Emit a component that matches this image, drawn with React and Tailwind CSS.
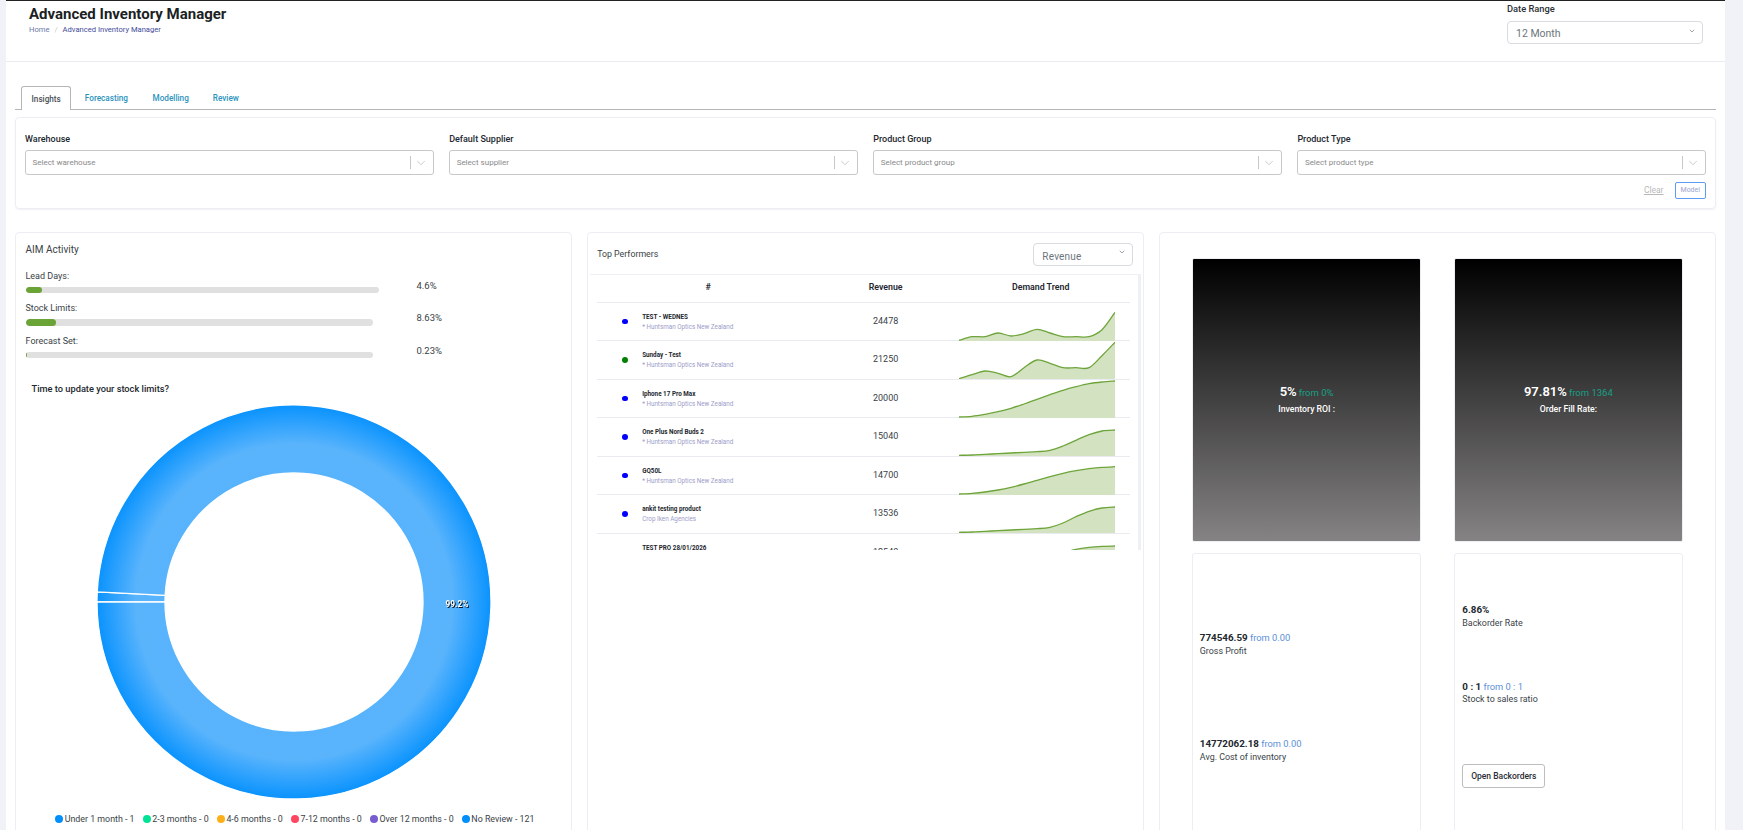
import React from 'react';
import { ChevronDown } from 'lucide-react';

const filters = [
  { label: 'Warehouse', placeholder: 'Select warehouse' },
  { label: 'Default Supplier', placeholder: 'Select supplier' },
  { label: 'Product Group', placeholder: 'Select product group' },
  { label: 'Product Type', placeholder: 'Select product type' },
];

const activity = [
  { label: 'Lead Days:', value: '4.6%', barW: 'w-[353px]', barH: 'h-[6px]', fill: 'w-[16px]', top: 'mb-[8.7px]' },
  { label: 'Stock Limits:', value: '8.63%', barW: 'w-[347px]', barH: 'h-[7px]', fill: 'w-[30px]', top: 'mb-[8.7px]' },
  { label: 'Forecast Set:', value: '0.23%', barW: 'w-[347px]', barH: 'h-[6px]', fill: 'w-[1px]', top: '' },
];

const legend = [
  { label: 'Under 1 month - 1', dot: 'bg-[#008ffb]' },
  { label: '2-3 months - 0', dot: 'bg-[#00e396]' },
  { label: '4-6 months - 0', dot: 'bg-[#feb019]' },
  { label: '7-12 months - 0', dot: 'bg-[#ff4560]' },
  { label: 'Over 12 months - 0', dot: 'bg-[#775dd0]' },
  { label: 'No Review - 121', dot: 'bg-[#008ffb]' },
];

const performers = [
  {
    name: 'TEST - WEDNES',
    supplier: '* Huntsman Optics New Zealand',
    value: '24478',
    dot: 'bg-[#0000ff]',
    trend: [37.3, 33.7, 33.7, 30, 33, 30.7, 26.3, 30, 33.7, 33.7, 33.7, 26.7, 9.3],
  },
  {
    name: 'Sunday - Test',
    supplier: '* Huntsman Optics New Zealand',
    value: '21250',
    dot: 'bg-[#008000]',
    trend: [37.7, 33.7, 30, 32.3, 35.7, 26.7, 19, 22.3, 26.7, 26.7, 26.7, 14.7, 1.3],
  },
  {
    name: 'Iphone 17 Pro Max',
    supplier: '* Huntsman Optics New Zealand',
    value: '20000',
    dot: 'bg-[#0000ff]',
    trend: [37, 36.3, 34.3, 31.7, 28.3, 24, 19.3, 14.7, 10.3, 6.7, 3.7, 2, 1],
  },
  {
    name: 'One Plus Nord Buds 2',
    supplier: '* Huntsman Optics New Zealand',
    value: '15040',
    dot: 'bg-[#0000ff]',
    trend: [37.3, 37, 36.3, 35.7, 35, 34.3, 33.7, 32.3, 28, 22.3, 16.7, 13, 12],
  },
  {
    name: 'GQ50L',
    supplier: '* Huntsman Optics New Zealand',
    value: '14700',
    dot: 'bg-[#0000ff]',
    trend: [37, 36.3, 35, 33, 30.3, 27, 23.3, 19.7, 16.3, 13.7, 11.7, 10.3, 9.7],
  },
  {
    name: 'ankit testing product',
    supplier: 'Crop Iken Agencies',
    value: '13536',
    dot: 'bg-[#0000ff]',
    trend: [37.3, 37, 36.3, 35.7, 35, 34.3, 33.7, 32.3, 28, 21.7, 16.3, 13, 12],
  },
  {
    name: 'TEST PRO 28/01/2026',
    supplier: '* Huntsman Optics New Zealand',
    value: '12540',
    dot: 'bg-[#0000ff]',
    trend: [37, 36.5, 35.5, 34, 32, 30, 27, 24, 19, 15.3, 13.3, 12.3, 12],
  },
];

// catmull-rom through the monthly points, same feel as the apex smooth curve
const trendPath = values => {
  const step = 156 / (values.length - 1);
  const pt = i => {
    const idx = Math.max(0, Math.min(values.length - 1, i));
    return [idx * step, values[idx]];
  };
  let line = `M0 ${values[0]}`;
  for (let i = 0; i < values.length - 1; i += 1) {
    const [x0, y0] = pt(i - 1);
    const [x1, y1] = pt(i);
    const [x2, y2] = pt(i + 1);
    const [x3, y3] = pt(i + 2);
    const c1x = x1 + (x2 - x0) / 6;
    const c1y = y1 + (y2 - y0) / 6;
    const c2x = x2 - (x3 - x1) / 6;
    const c2y = y2 - (y3 - y1) / 6;
    line += ` C${c1x} ${c1y} ${c2x} ${c2y} ${x2} ${y2}`;
  }
  return line;
};

const Sparkline = ({ values }) => {
  const line = trendPath(values);
  return (
    <svg width="156" height="38" viewBox="0 0 156 38" className="block ml-[7px]">
      <path d={`${line} L156 38 L0 38 Z`} fill="#d3e2c0" />
      <path d={line} fill="none" stroke="#6ea53b" strokeWidth="1.3" />
    </svg>
  );
};

const polar = (r, deg) => {
  const a = (deg * Math.PI) / 180;
  return [197 + r * Math.cos(a), 197 + r * Math.sin(a)];
};

const slicePath = (from, to) => {
  const large = to - from > 180 ? 1 : 0;
  const [ax, ay] = polar(197, from);
  const [bx, by] = polar(197, to);
  const [cx, cy] = polar(129, to);
  const [dx, dy] = polar(129, from);
  return `M${ax} ${ay} A197 197 0 ${large} 1 ${bx} ${by} L${cx} ${cy} A129 129 0 ${large} 0 ${dx} ${dy} Z`;
};

const Donut = () => (
  <svg width="394" height="394" viewBox="0 0 394 394" className="block ml-[71px] mt-[10.5px]">
    <defs>
      <radialGradient id="ring" gradientUnits="userSpaceOnUse" cx="197" cy="197" r="197">
        <stop offset="0.65" stopColor="#58b3fd" />
        <stop offset="0.8" stopColor="#5ab4fc" />
        <stop offset="1" stopColor="#0a93fe" />
      </radialGradient>
    </defs>
    <path d={slicePath(180, 182.95)} fill="url(#ring)" stroke="#fff" strokeWidth="1.3" />
    <path d={slicePath(182.95, 540)} fill="url(#ring)" stroke="#fff" strokeWidth="1.3" />
    <text
      x="360"
      y="202"
      textAnchor="middle"
      fill="#fff"
      className="text-[8.3px] font-bold drop-shadow-[1px_1px_0.3px_rgba(0,0,0,0.9)]"
    >
      99.2%
    </text>
  </svg>
);

const Header = () => (
  <div className="flex h-[60px] justify-between border-b border-[#e9ebf0] box-content">
    <div className="pl-[23px] pt-[3px]">
      <h1 className="text-[15px] leading-[20px] font-bold text-[#1c1f24]">Advanced Inventory Manager</h1>
      <div className="mt-[1px] flex items-center text-[7.6px] leading-[10px]">
        <span className="text-[#6b77a8]">Home</span>
        <span className="mx-[5px] text-[#c4c6cc]">/</span>
        <span className="text-[#3f4a9a]">Advanced Inventory Manager</span>
      </div>
    </div>
    <div className="pr-[22px] pt-[2px]">
      <div className="text-[9.3px] leading-[12px] font-medium text-[#2a2e35]">Date Range</div>
      <div className="mt-[6px] flex h-[23px] w-[196px] items-center justify-between rounded-[4px] border border-[#d8dbe0] pl-[8px] pr-[6px]">
        <span className="mt-[2px] text-[10.5px] text-[#6c757d]">12 Month</span>
        <ChevronDown size={8} strokeWidth={2} className="mb-[4px] text-[#6c757d]" />
      </div>
    </div>
  </div>
);

const Tabs = () => (
  <div className="mt-[24px] flex h-[24px] border-b border-[#b5b5b5] pl-[6px] text-[8.2px] leading-[24px] font-medium">
    <div className="h-[24px] rounded-t-[3px] border border-b-0 border-[#b5b5b5] bg-white px-[9.5px] text-[#4a5058]">
      Insights
    </div>
    <div className="ml-[1px] px-[12.5px] text-[#2b93bd]">Forecasting</div>
    <div className="px-[12px] text-[#2b93bd]">Modelling</div>
    <div className="px-[12px] text-[#2b93bd]">Review</div>
  </div>
);

const Filters = () => (
  <div className="mt-[7px] rounded-[4px] border border-[#eceef3] px-[9px] pt-[15px] pb-[9px] shadow-[0_1px_2px_rgba(0,0,0,0.06)]">
    <div className="grid grid-cols-4 gap-x-[15.5px]">
      {filters.map(f => (
        <div key={f.label}>
          <div className="text-[9px] leading-[12px] font-medium text-[#23272e]">{f.label}</div>
          <div className="mt-[5px] flex h-[25px] items-center rounded-[3px] border border-[#c8c8c8] pl-[6.5px] pr-[2px]">
            <span className="flex-1 text-[8px] text-[#8a8a8a]">{f.placeholder}</span>
            <span className="h-[13px] w-px bg-[#c8c8c8]" />
            <ChevronDown size={14} strokeWidth={1.5} className="mx-[3px] text-[#c4c4c4]" />
          </div>
        </div>
      ))}
    </div>
    <div className="mt-[7px] flex items-center justify-end">
      <span className="text-[8.5px] text-[#b9b9b9] underline">Clear</span>
      <span className="ml-[11px] flex h-[17px] w-[31.5px] items-center justify-center rounded-[2px] border border-[#5e9df5] text-[7px] text-[#9ea3cf]">
        Model
      </span>
    </div>
  </div>
);

const Activity = () => (
  <div className="h-[620px] rounded-[4px] border border-[#eceef3] pl-[9.5px] pt-[10.5px]">
    <div className="text-[10px] leading-[14px] text-[#3a3f47]">AIM Activity</div>
    <div className="mt-[13px]">
      {activity.map(a => (
        <div key={a.label} className={`flex ${a.top}`}>
          <div className="w-[391px]">
            <div className="text-[9px] leading-[12px] text-[#3a3f47]">{a.label}</div>
            <div className={`mt-[5.3px] overflow-hidden rounded-full bg-[#e0e0e0] ${a.barW} ${a.barH}`}>
              <div className={`h-full rounded-full bg-[#6aa336] ${a.fill}`} />
            </div>
          </div>
          <div className="mt-[10px] text-[9.5px] leading-[12px] text-[#3a3f47]">{a.value}</div>
        </div>
      ))}
    </div>
    <div className="mt-[24.7px] ml-[6px] text-[9.25px] leading-[12px] font-medium text-[#23272e]">
      Time to update your stock limits?
    </div>
    <Donut />
    <div className="mt-[14px] ml-[29.5px] flex gap-x-[8px] text-[8.85px] leading-[12px] text-[#3a3f47]">
      {legend.map(l => (
        <div key={l.label} className="flex items-center gap-x-[1.7px] whitespace-nowrap">
          <span className={`h-[8px] w-[8px] rounded-full ${l.dot}`} />
          {l.label}
        </div>
      ))}
    </div>
  </div>
);

const TopPerformers = () => (
  <div className="h-[620px] rounded-[4px] border border-[#eceef3]">
    <div className="flex h-[41px] items-center justify-between pl-[9px] pr-[10px]">
      <span className="mt-[3px] text-[8.8px] text-[#3a3f47]">Top Performers</span>
      <div className="mt-[2.5px] flex h-[23px] w-[99.5px] items-center justify-between rounded-[4px] border border-[#d8dbe0] pl-[8px] pr-[6px]">
        <span className="mt-[4px] text-[10px] tracking-[0.2px] text-[#6c757d]">Revenue</span>
        <ChevronDown size={8} strokeWidth={2} className="mb-[4px] text-[#6c757d]" />
      </div>
    </div>
    <div className="mx-[1.5px] h-[276.5px] overflow-hidden border-t border-r-[3px] border-[#eef0f5] pl-[7px] pr-[8px]">
      <div className="grid h-[28px] grid-cols-[223px_132px_178px] items-center border-b border-[#e9ebf0] text-center text-[8.8px] font-semibold text-[#23272e]">
        <span>#</span>
        <span>Revenue</span>
        <span>Demand Trend</span>
      </div>
      {performers.map(p => (
        <div
          key={p.name}
          className="grid h-[38.5px] grid-cols-[223px_132px_178px] items-center border-b border-[#e9ebf0]"
        >
          <div className="flex items-center pl-[25.5px]">
            <span className={`h-[5.5px] w-[5.5px] rounded-full ${p.dot}`} />
            <div className="ml-[14.5px] text-[6.3px] leading-[10px]">
              <div className="font-bold text-[#23272e]">{p.name}</div>
              <div className="text-[#9c9cc9]">{p.supplier}</div>
            </div>
          </div>
          <div className="text-center text-[9px] text-[#3a3f47]">{p.value}</div>
          <Sparkline values={p.trend} />
        </div>
      ))}
    </div>
  </div>
);

const GradientTile = ({ value, from, label }) => (
  <div className="flex h-[284px] flex-col items-center justify-center rounded-[2px] border border-[#eceef3] bg-linear-to-b/srgb from-black to-[#858384] leading-[16px] text-white">
    <div>
      <span className="text-[13px] font-semibold">{value}</span>
      <span className="ml-[2px] text-[9.5px] text-[#16a085]">{from}</span>
    </div>
    <div className="text-[8.7px] font-medium">{label}</div>
  </div>
);

const Stat = ({ value, from, label, className }) => (
  <div className={`leading-[13.5px] ${className}`}>
    <div>
      <span className="text-[9.8px] font-bold text-[#23272e]">{value}</span>
      {from && <span className="text-[9.3px] text-[#5b8fd9]"> {from}</span>}
    </div>
    <div className="text-[8.9px] text-[#3a3f47]">{label}</div>
  </div>
);

const Metrics = () => (
  <div className="h-[620px] rounded-[4px] border border-[#eceef3] pl-[32px] pt-[25.5px]">
    <div className="grid grid-cols-[228.5px_229px] gap-x-[33px] gap-y-[11px]">
      <GradientTile value="5%" from="from 0%" label="Inventory ROI :" />
      <GradientTile value="97.81%" from="from 1364" label="Order Fill Rate:" />
      <div className="h-[330px] rounded-[3px] border border-[#eceef3] pl-[6.5px] pt-[75px]">
        <Stat value="774546.59" from="from 0.00" label="Gross Profit" />
        <Stat value="14772062.18" from="from 0.00" label="Avg. Cost of inventory" className="mt-[77px]" />
      </div>
      <div className="h-[330px] rounded-[3px] border border-[#eceef3] pl-[7.5px] pt-[47px]">
        <Stat value="6.86%" label="Backorder Rate" />
        <Stat value="0 : 1" from="from 0 : 1" label="Stock to sales ratio" className="mt-[47.7px]" />
        <button className="mt-[57.8px] flex h-[24px] w-[83px] items-center justify-center rounded-[3px] border border-[#bdbdbd] text-[8.5px] font-medium text-[#2a2e35]">
          Open Backorders
        </button>
      </div>
    </div>
  </div>
);

const App = () => (
  <div className="h-[830px] overflow-hidden bg-[#f1f2f8] pl-[6px] pr-[18px] font-['Roboto',sans-serif]">
    <div className="h-[830px] overflow-hidden border-t border-[#222] bg-white">
      <Header />
      <div className="px-[9px]">
        <Tabs />
        <Filters />
        <div className="mt-[22.5px] grid grid-cols-3 gap-x-[15.5px]">
          <Activity />
          <TopPerformers />
          <Metrics />
        </div>
      </div>
    </div>
  </div>
);

export default App;
